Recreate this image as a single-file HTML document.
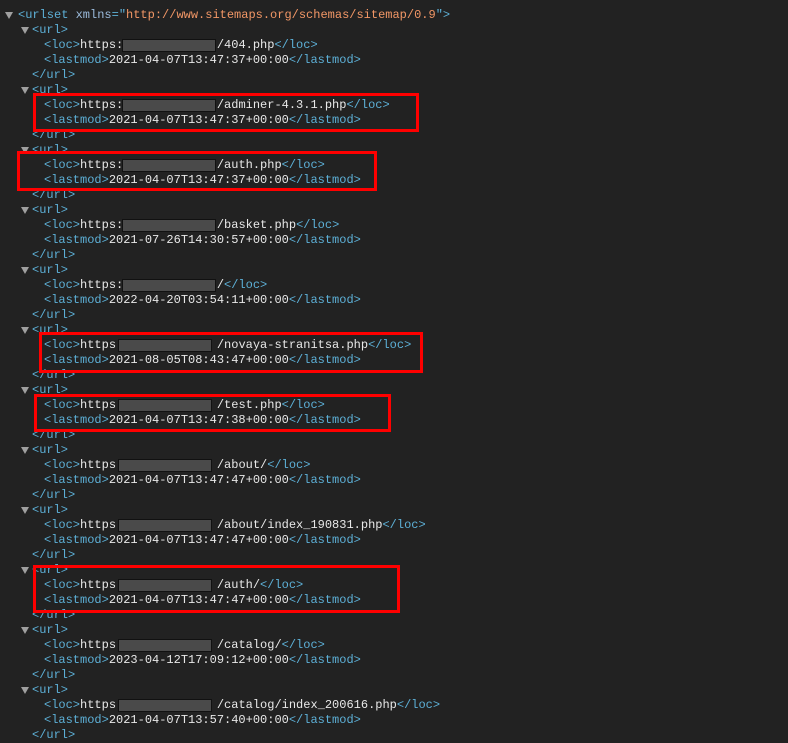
<!DOCTYPE html>
<html><head><meta charset="utf-8"><style>
html,body{margin:0;padding:0;background:#222;width:788px;height:741px;overflow:hidden}
#c{position:absolute;left:0;top:8px;font-family:"Liberation Mono",monospace;font-size:12px;color:#e8e8e8}
#c div{height:15px;line-height:15px;white-space:pre;position:relative}
.i0{padding-left:18px}.i1{padding-left:32px}.i2{padding-left:44px}
.t{color:#5db0d7}.a{color:#9bbbdc}.v{color:#f29766}
.tri{position:absolute;width:0;height:0;border-left:4px solid transparent;border-right:4px solid transparent;border-top:7px solid #a0a0a0;top:4px}
.i0 .tri{left:5px}.i1 .tri{left:21px}
.r{position:absolute;border:3px solid #f00;box-sizing:border-box}
.g{position:absolute;top:1px;height:13px;width:94px;background:#4a4a4a;border:1px solid #111;box-sizing:border-box}
.g1{left:122px}.g2{left:118px}
</style></head><body>
<div id="c">
<div class="i0"><span class="tri"></span><span class="t">&lt;urlset </span><span class="a">xmlns</span><span class="t">="</span><span class="v">http://www.sitemaps.org/schemas/sitemap/0.9</span><span class="t">"&gt;</span></div>

<div class="i1 t"><span class="tri"></span>&lt;url&gt;</div>
<div class="i2"><span class="t">&lt;loc&gt;</span>https:             /404.php<span class="t">&lt;/loc&gt;</span><span class="g g1"></span></div>
<div class="i2"><span class="t">&lt;lastmod&gt;</span>2021-04-07T13:47:37+00:00<span class="t">&lt;/lastmod&gt;</span></div>
<div class="i1 t">&lt;/url&gt;</div>

<div class="i1 t"><span class="tri"></span>&lt;url&gt;</div>
<div class="i2"><span class="t">&lt;loc&gt;</span>https:             /adminer-4.3.1.php<span class="t">&lt;/loc&gt;</span><span class="g g1"></span></div>
<div class="i2"><span class="t">&lt;lastmod&gt;</span>2021-04-07T13:47:37+00:00<span class="t">&lt;/lastmod&gt;</span></div>
<div class="i1 t">&lt;/url&gt;</div>

<div class="i1 t"><span class="tri"></span>&lt;url&gt;</div>
<div class="i2"><span class="t">&lt;loc&gt;</span>https:             /auth.php<span class="t">&lt;/loc&gt;</span><span class="g g1"></span></div>
<div class="i2"><span class="t">&lt;lastmod&gt;</span>2021-04-07T13:47:37+00:00<span class="t">&lt;/lastmod&gt;</span></div>
<div class="i1 t">&lt;/url&gt;</div>

<div class="i1 t"><span class="tri"></span>&lt;url&gt;</div>
<div class="i2"><span class="t">&lt;loc&gt;</span>https:             /basket.php<span class="t">&lt;/loc&gt;</span><span class="g g1"></span></div>
<div class="i2"><span class="t">&lt;lastmod&gt;</span>2021-07-26T14:30:57+00:00<span class="t">&lt;/lastmod&gt;</span></div>
<div class="i1 t">&lt;/url&gt;</div>

<div class="i1 t"><span class="tri"></span>&lt;url&gt;</div>
<div class="i2"><span class="t">&lt;loc&gt;</span>https:             /<span class="t">&lt;/loc&gt;</span><span class="g g1"></span></div>
<div class="i2"><span class="t">&lt;lastmod&gt;</span>2022-04-20T03:54:11+00:00<span class="t">&lt;/lastmod&gt;</span></div>
<div class="i1 t">&lt;/url&gt;</div>

<div class="i1 t"><span class="tri"></span>&lt;url&gt;</div>
<div class="i2"><span class="t">&lt;loc&gt;</span>https              /novaya-stranitsa.php<span class="t">&lt;/loc&gt;</span><span class="g g2"></span></div>
<div class="i2"><span class="t">&lt;lastmod&gt;</span>2021-08-05T08:43:47+00:00<span class="t">&lt;/lastmod&gt;</span></div>
<div class="i1 t">&lt;/url&gt;</div>

<div class="i1 t"><span class="tri"></span>&lt;url&gt;</div>
<div class="i2"><span class="t">&lt;loc&gt;</span>https              /test.php<span class="t">&lt;/loc&gt;</span><span class="g g2"></span></div>
<div class="i2"><span class="t">&lt;lastmod&gt;</span>2021-04-07T13:47:38+00:00<span class="t">&lt;/lastmod&gt;</span></div>
<div class="i1 t">&lt;/url&gt;</div>

<div class="i1 t"><span class="tri"></span>&lt;url&gt;</div>
<div class="i2"><span class="t">&lt;loc&gt;</span>https              /about/<span class="t">&lt;/loc&gt;</span><span class="g g2"></span></div>
<div class="i2"><span class="t">&lt;lastmod&gt;</span>2021-04-07T13:47:47+00:00<span class="t">&lt;/lastmod&gt;</span></div>
<div class="i1 t">&lt;/url&gt;</div>

<div class="i1 t"><span class="tri"></span>&lt;url&gt;</div>
<div class="i2"><span class="t">&lt;loc&gt;</span>https              /about/index_190831.php<span class="t">&lt;/loc&gt;</span><span class="g g2"></span></div>
<div class="i2"><span class="t">&lt;lastmod&gt;</span>2021-04-07T13:47:47+00:00<span class="t">&lt;/lastmod&gt;</span></div>
<div class="i1 t">&lt;/url&gt;</div>

<div class="i1 t"><span class="tri"></span>&lt;url&gt;</div>
<div class="i2"><span class="t">&lt;loc&gt;</span>https              /auth/<span class="t">&lt;/loc&gt;</span><span class="g g2"></span></div>
<div class="i2"><span class="t">&lt;lastmod&gt;</span>2021-04-07T13:47:47+00:00<span class="t">&lt;/lastmod&gt;</span></div>
<div class="i1 t">&lt;/url&gt;</div>

<div class="i1 t"><span class="tri"></span>&lt;url&gt;</div>
<div class="i2"><span class="t">&lt;loc&gt;</span>https              /catalog/<span class="t">&lt;/loc&gt;</span><span class="g g2"></span></div>
<div class="i2"><span class="t">&lt;lastmod&gt;</span>2023-04-12T17:09:12+00:00<span class="t">&lt;/lastmod&gt;</span></div>
<div class="i1 t">&lt;/url&gt;</div>

<div class="i1 t"><span class="tri"></span>&lt;url&gt;</div>
<div class="i2"><span class="t">&lt;loc&gt;</span>https              /catalog/index_200616.php<span class="t">&lt;/loc&gt;</span><span class="g g2"></span></div>
<div class="i2"><span class="t">&lt;lastmod&gt;</span>2021-04-07T13:57:40+00:00<span class="t">&lt;/lastmod&gt;</span></div>
<div class="i1 t">&lt;/url&gt;</div>
</div>
<div class="r" style="left:33px;top:93px;width:386px;height:39px"></div>
<div class="r" style="left:17px;top:151px;width:360px;height:40px"></div>
<div class="r" style="left:39px;top:332px;width:384px;height:41px"></div>
<div class="r" style="left:34px;top:394px;width:357px;height:38px"></div>
<div class="r" style="left:33px;top:565px;width:367px;height:48px"></div>
</body></html>
